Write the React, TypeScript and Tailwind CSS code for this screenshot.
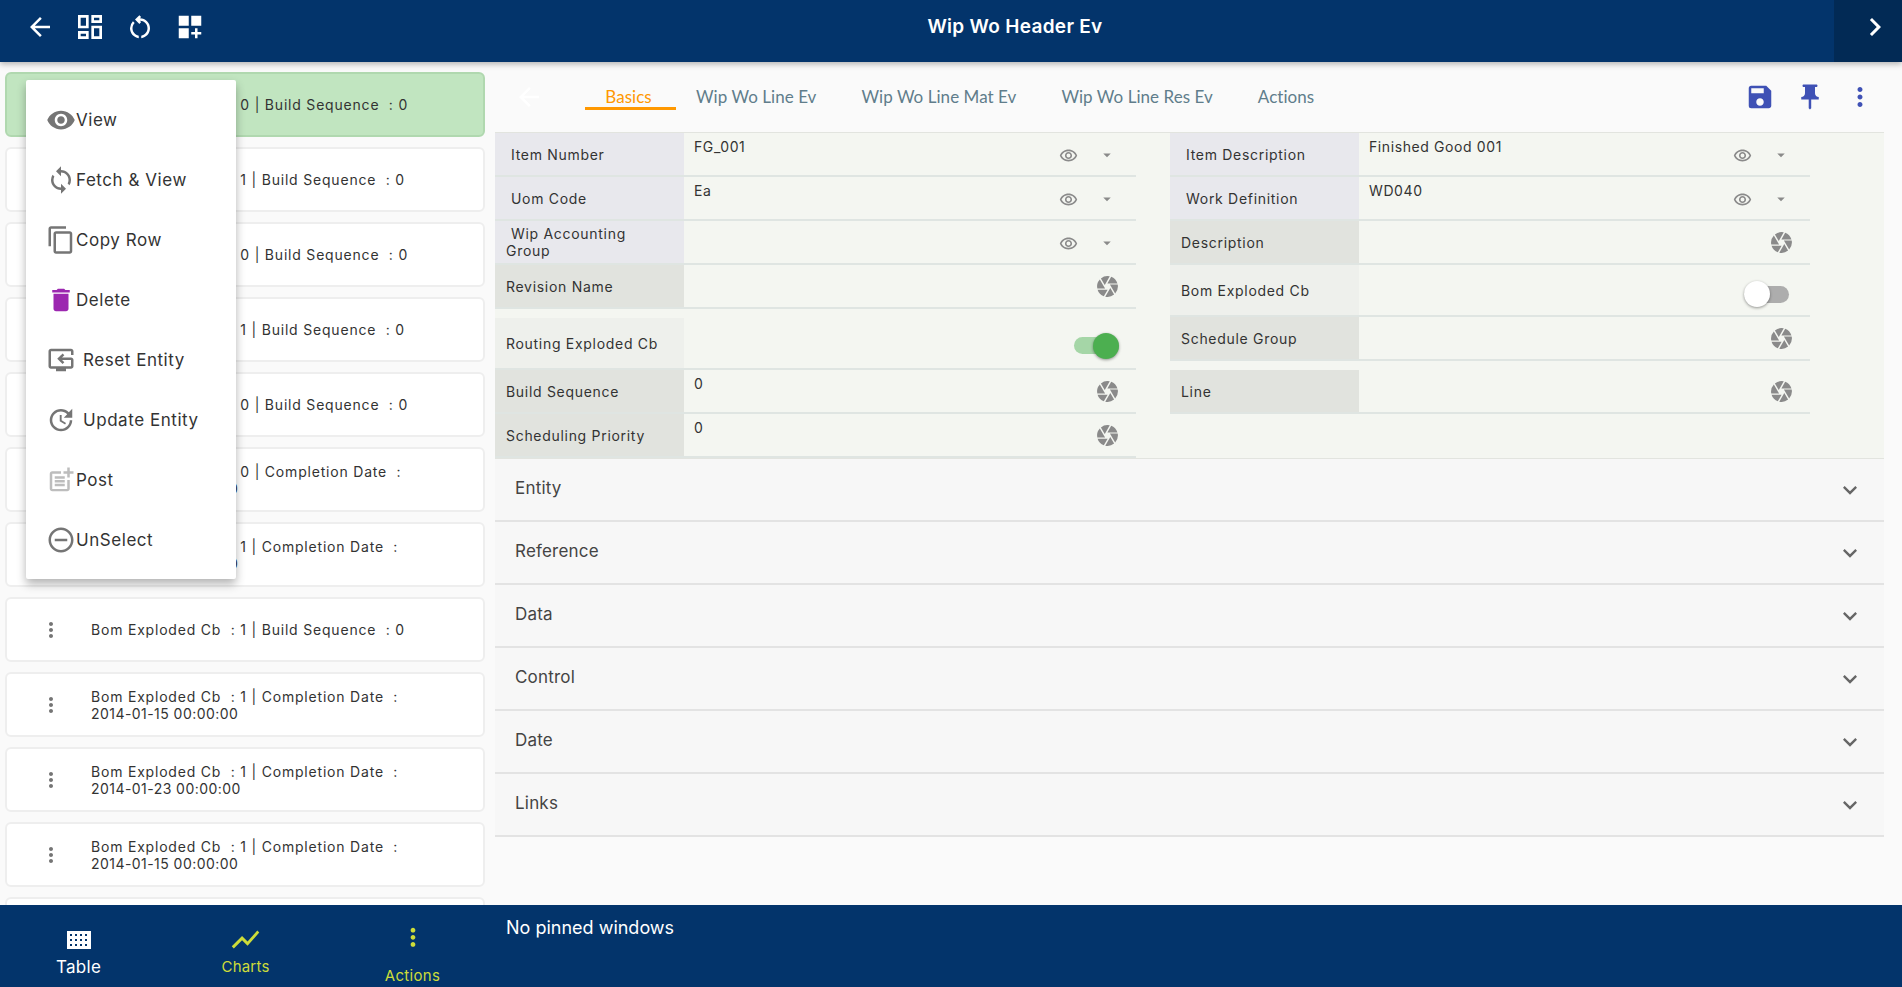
import {
  MdArrowBack,
  MdOutlineDashboard,
  MdOutlineRestartAlt,
  MdDashboardCustomize,
  MdChevronRight,
  MdVisibility,
  MdSync,
  MdOutlineContentCopy,
  MdDelete,
  MdOutlineResetTv,
  MdUpdate,
  MdOutlinePostAdd,
  MdOutlineRemoveCircleOutline,
  MdMoreVert,
  MdSave,
  MdPushPin,
  MdOutlineRemoveRedEye,
  MdArrowDropDown,
  MdCamera,
  MdExpandMore,
  MdShowChart,
} from "react-icons/md";
import type { ReactNode } from "react";

const sans = "font-['Inter','Liberation_Sans',sans-serif]";

const cards = [
  ["0", "Build Sequence  : 0", ""],
  ["1", "Build Sequence  : 0", ""],
  ["0", "Build Sequence  : 0", ""],
  ["1", "Build Sequence  : 0", ""],
  ["0", "Build Sequence  : 0", ""],
  ["0", "Completion Date  :", "2014-01-15 00:00:00"],
  ["1", "Completion Date  :", "2014-01-15 00:00:00"],
  ["1", "Build Sequence  : 0", ""],
  ["1", "Completion Date  :", "2014-01-15 00:00:00"],
  ["1", "Completion Date  :", "2014-01-23 00:00:00"],
  ["1", "Completion Date  :", "2014-01-15 00:00:00"],
];

function Card({ row, selected }: { row: string[]; selected: boolean }) {
  return (
    <div
      className={`flex h-[65px] w-[480px] shrink-0 items-center rounded-md border-2 ${
        selected ? "border-[#b0d8af] bg-[#c1e5c0]" : "border-[#eeeeee] bg-white"
      }`}
    >
      <MdMoreVert className="ml-[32px] shrink-0 text-[24px] text-[#757575]" />
      <div className="ml-[28px] whitespace-pre text-[14px] leading-[17px] text-[#333333]">
        <div className="tracking-[0.8px]">
          Bom Exploded Cb  : {row[0]} | {row[1]}
        </div>
        {row[2] && <div className="tracking-[0.45px]">{row[2]}</div>}
      </div>
    </div>
  );
}

const menu = [
  { icon: <MdVisibility className="text-[30px] text-[#757575]" />, label: "View", gap: "ml-0" },
  { icon: <MdSync className="text-[30px] text-[#757575]" />, label: "Fetch & View", gap: "ml-0" },
  { icon: <MdOutlineContentCopy className="text-[30px] text-[#757575]" />, label: "Copy Row", gap: "ml-0" },
  { icon: <MdDelete className="text-[30px] text-[#9c27b0]" />, label: "Delete", gap: "ml-0" },
  { icon: <MdOutlineResetTv className="text-[30px] text-[#757575]" />, label: "Reset Entity", gap: "ml-[7px]" },
  { icon: <MdUpdate className="text-[30px] text-[#757575]" />, label: "Update Entity", gap: "ml-[7px]" },
  { icon: <MdOutlinePostAdd className="text-[30px] text-[#bdbdbd]" />, label: "Post", gap: "ml-0" },
  { icon: <MdOutlineRemoveCircleOutline className="text-[30px] text-[#757575]" />, label: "UnSelect", gap: "ml-0" },
];

function ContextMenu() {
  return (
    <div className="absolute left-[26px] top-[18px] z-10 flex w-[210px] flex-col rounded-[2px] bg-white pb-[9px] pt-[10px] shadow-[0_5px_10px_rgba(0,0,0,0.3)]">
      {menu.map((m) => (
        <div key={m.label} className="flex h-[60px] items-center pl-[19px] text-[17px] tracking-[0.55px] text-[#333333]">
          <span className="flex w-[31px] justify-center">{m.icon}</span>
          <span className={`${m.gap} pt-[2px]`}>{m.label}</span>
        </div>
      ))}
    </div>
  );
}

type FieldProps = {
  label: ReactNode;
  value?: string;
  kind?: "lov" | "shutter" | "on" | "off";
  h: string;
  dark?: boolean;
  light?: boolean;
  indent?: boolean;
  inset?: string;
};

function Field({ label, value, kind = "shutter", h, dark, light, indent, inset }: FieldProps) {
  const labelBg = light ? "bg-[#eef0ec]" : dark ? "bg-[#e1e3de]" : "bg-[#e8e8ed]";
  return (
    <div className={`flex ${h} border-b-2 border-[#dfe5e2]`}>
      <div className={`flex w-[189px] shrink-0 flex-col ${inset ?? ""}`}>
        <div className={`flex flex-1 items-center ${labelBg} text-[14px] leading-[17px] tracking-[0.7px] text-[#333333] ${indent ? "pl-[16px]" : "pl-[11px]"}`}>
          <span>{label}</span>
        </div>
      </div>
      <div className="flex flex-1 items-start">
        <div className="flex-1 pl-[10px] pt-[5px] text-[14px] leading-[17px] tracking-[0.6px] text-[#333333]">{value}</div>
        {kind === "lov" && (
          <div className="flex h-full items-center pt-[2px]">
            <MdOutlineRemoveRedEye className="text-[19px] text-[#8a8a8a]" />
            <MdArrowDropDown className="mx-[20px] text-[18px] text-[#8a8a8a]" />
          </div>
        )}
        {kind === "shutter" && (
          <div className={`flex h-full items-center ${inset ?? ""}`}>
            <MdCamera className="mr-[16px] text-[25px] text-[#8a8a8a]" />
          </div>
        )}
        {kind === "on" && (
          <div className="flex h-full items-center pt-[14px]">
            <div className="relative mr-[17px] h-[17px] w-[45px] rounded-full bg-[#a5d6a7]">
              <div className="absolute -top-[4.5px] right-0 h-[26px] w-[26px] rounded-full bg-[#4caf50] shadow-[0_1px_3px_rgba(0,0,0,0.4)]" />
            </div>
          </div>
        )}
        {kind === "off" && (
          <div className="flex h-full items-center pt-[8px]">
            <div className="relative mr-[21px] h-[17px] w-[45px] rounded-full bg-[#adadad]">
              <div className="absolute -top-[4.5px] left-0 h-[26px] w-[26px] rounded-full bg-white shadow-[0_1px_3px_rgba(0,0,0,0.4)]" />
            </div>
          </div>
        )}
      </div>
    </div>
  );
}

const sections = ["Entity", "Reference", "Data", "Control", "Date", "Links"];

export default function App() {
  return (
    <div className={`flex h-screen w-full flex-col overflow-hidden bg-[#fafafa] ${sans}`}>
      <header className="z-20 flex h-[62px] shrink-0 items-stretch bg-[#03346b] shadow-[0_2px_6px_rgba(0,0,0,0.3)]">
        <div className="flex w-[212px] items-center gap-[20px] pb-[8px] pl-[25px] text-white">
          <MdArrowBack className="text-[30px]" />
          <MdOutlineDashboard className="-mx-[1px] text-[32px]" />
          <MdOutlineRestartAlt className="text-[30px]" />
          <MdDashboardCustomize className="text-[30px]" />
        </div>
        <div className="flex flex-1 items-center justify-center pb-[8px] pr-[16px] text-[19px] font-semibold tracking-[0.3px] text-white">
          Wip Wo Header Ev
        </div>
        <div className="flex w-[68px] items-center justify-end bg-[#022a55] pb-[8px] pr-[9px] text-white">
          <MdChevronRight className="text-[36px]" />
        </div>
      </header>

      <div className="flex min-h-0 flex-1">
        <aside className="relative flex w-[495px] shrink-0 flex-col gap-[10px] overflow-hidden pl-[5px] pt-[10px]">
          {cards.map((c, i) => (
            <Card key={i} row={c} selected={i === 0} />
          ))}
          <div className="h-[65px] w-[480px] shrink-0 rounded-md border-2 border-[#eeeeee] bg-white" />
          <ContextMenu />
        </aside>

        <main className="flex min-w-0 flex-1 flex-col pr-[18px]">
          <div className="flex h-[70px] shrink-0 items-start">
            <div className="flex h-[70px] w-[90px] items-center pl-[19px]">
              <MdArrowBack className="text-[30px] text-white" />
            </div>
            <nav className="flex font-['Lato','Open_Sans',sans-serif] text-[17px] leading-[19px] tracking-[0.05px] text-[#607d8b]">
              <span className="flex h-[48px] w-[91px] items-end justify-center border-b-[3px] border-[#ff9800] pb-[1px] pr-[4px] text-[#ff9800]">Basics</span>
              <span className="ml-[20px] flex h-[48px] items-end border-b-[3px] border-transparent pb-[1px]">Wip Wo Line Ev</span>
              <span className="ml-[45px] flex h-[48px] items-end border-b-[3px] border-transparent pb-[1px]">Wip Wo Line Mat Ev</span>
              <span className="ml-[45px] flex h-[48px] items-end border-b-[3px] border-transparent pb-[1px]">Wip Wo Line Res Ev</span>
              <span className="ml-[45px] flex h-[48px] items-end border-b-[3px] border-transparent pb-[1px]">Actions</span>
            </nav>
            <div className="ml-auto flex h-[50px] items-end gap-[20px] pr-[9px] text-[#3f51b5]">
              <MdSave className="text-[30px]" />
              <MdPushPin className="text-[30px]" />
              <MdMoreVert className="text-[30px]" />
            </div>
          </div>

          <section className="flex shrink-0 items-start gap-[34px] border-y border-[#e2e4df] bg-[#f4f6f1] pr-[74px]">
            <div className="flex w-[641px] flex-col">
              <Field label="Item Number" value="FG_001" kind="lov" h="h-[44px]" indent />
              <Field label="Uom Code" value="Ea" kind="lov" h="h-[44px]" indent />
              <Field
                label={
                  <>
                    <span className="pl-[5px]">Wip Accounting</span>
                    <br />
                    Group
                  </>
                }
                kind="lov"
                h="h-[44px]"
              />
              <Field label="Revision Name" h="h-[44px]" dark />
              <Field label="Routing Exploded Cb" kind="on" h="h-[61px]" light inset="pt-[9px]" />
              <Field label="Build Sequence" value="0" h="h-[44px]" dark />
              <Field label="Scheduling Priority" value="0" h="h-[44px]" dark />
            </div>
            <div className="flex w-[640px] flex-col">
              <Field label="Item Description" value="Finished Good 001" kind="lov" h="h-[44px]" indent />
              <Field label="Work Definition" value="WD040" kind="lov" h="h-[44px]" indent />
              <Field label="Description" h="h-[44px]" dark />
              <Field label="Bom Exploded Cb" kind="off" h="h-[52px]" light />
              <Field label="Schedule Group" h="h-[44px]" dark />
              <Field label="Line" h="h-[53px]" dark inset="pt-[9px]" />
            </div>
          </section>

          <section className="flex flex-col">
            {sections.map((s) => (
              <div key={s} className="flex h-[63px] items-center justify-between border-b-2 border-[#e3e3e3] bg-[#f7f7f7] pl-[20px] pr-[20px] text-[17px] tracking-[0.2px] text-[#444444]">
                <span className="pb-[2px]">{s}</span>
                <MdExpandMore className="text-[28px] text-[#666666]" />
              </div>
            ))}
          </section>
        </main>
      </div>

      <footer className="z-20 flex h-[82px] shrink-0 bg-[#03346b]">
        <div className="flex w-[495px] shrink-0">
          <div className="flex w-[157px] flex-col items-center pt-[10px] text-[17px] tracking-[0.3px] text-white">
            <svg width="24" height="18" viewBox="0 0 24 18" className="mt-[16px]">
              <path d="M0 0h24v18H0z" fill="#fff" />
              {[3, 8, 13, 18].map((x) =>
                [3, 8, 13].map((y) => <rect key={`${x}-${y}`} x={x} y={y} width="2" height="2" fill="#03346b" />),
              )}
            </svg>
            <span className="mt-[6px]">Table</span>
          </div>
          <div className="flex w-[177px] flex-col items-center pt-[18px] text-[15px] tracking-[0.2px] text-[#cddc39]">
            <MdShowChart className="text-[33px]" />
            <span className="mt-[0px]">Charts</span>
          </div>
          <div className="flex w-[157px] flex-col items-center pt-[18px] text-[15px] tracking-[0.3px] text-[#cddc39]">
            <MdMoreVert className="text-[30px]" />
            <span className="mt-[13px]">Actions</span>
          </div>
        </div>
        <div className="pl-[11px] pt-[9px] text-[18px] text-white">No pinned windows</div>
      </footer>
    </div>
  );
}
